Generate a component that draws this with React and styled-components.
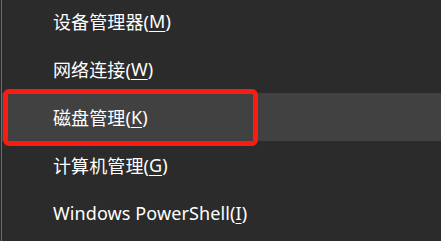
import React from "react";
import styled, { createGlobalStyle } from "styled-components";

const Global = createGlobalStyle`
  html, body { margin: 0; padding: 0; background: #2b2b2b; }
  body { width: 441px; height: 241px; overflow: hidden; }
`;

const Menu = styled.div`
  margin-left: 1px;
  border-left: 1px solid #6a6a6a;
  height: 244px;
  background: #2b2b2b;
  display: flex;
  flex-direction: column;
  margin-top: -3px;
  box-sizing: border-box;
  font-family: "Noto Sans", "Noto Sans CJK SC", sans-serif;
`;

const Item = styled.div`
  position: relative;
  height: 48px;
  flex: 0 0 48px;
  display: flex;
  align-items: center;
  padding-left: 51px;
  background: ${(p) => (p.$active ? "#414141" : "transparent")};
  color: #ffffff;
  font-size: 18px;
  letter-spacing: 0.1px;
`;

const Key = styled.span`
  text-decoration: underline;
  text-underline-offset: 3px;
  text-decoration-thickness: 1px;
`;

const Highlight = styled.div`
  position: absolute;
  left: 1px;
  top: -4px;
  width: 255px;
  height: 57px;
  box-sizing: border-box;
  border: 5px solid #fa1c12;
  border-radius: 6px;
  pointer-events: none;
`;

const items = [
  { label: "设备管理器", key: "M" },
  { label: "网络连接", key: "W" },
  { label: "磁盘管理", key: "K", active: true },
  { label: "计算机管理", key: "G" },
  { label: "Windows PowerShell", key: "I" },
];

export default function App() {
  return (
    <>
      <Global />
      <Menu>
        {items.map((it) => (
          <Item key={it.key} $active={it.active}>
            {it.label}(<Key>{it.key}</Key>)
            {it.active && <Highlight />}
          </Item>
        ))}
      </Menu>
    </>
  );
}
